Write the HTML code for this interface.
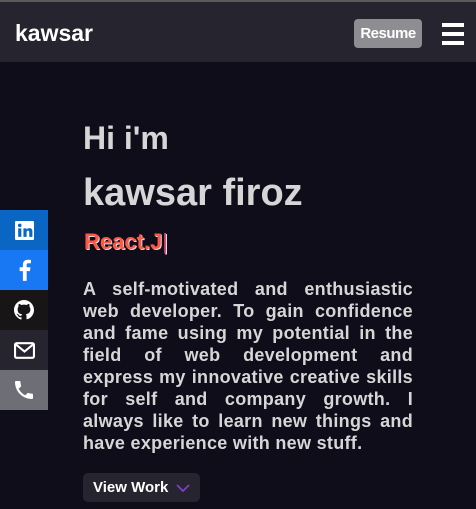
<!DOCTYPE html>
<html><head><style>
*{margin:0;padding:0;box-sizing:border-box}
body{width:476px;height:509px;overflow:hidden;background:#0f0d1a;font-family:"Liberation Sans",sans-serif;position:relative}
.top{height:2px;background:#5a5a5a}
.nav{height:60px;background:#25242f;position:relative}
.logo{position:absolute;left:15px;top:18px;color:#fff;font-weight:bold;font-size:23px}
.res{position:absolute;left:354px;top:17px;width:68px;height:29px;background:#8e8d92;border-radius:4px;color:#fff;font-weight:bold;font-size:15px;text-align:center;line-height:29px;letter-spacing:-0.5px}
.ham{position:absolute;left:442px;top:21px;width:22px}
.ham div{height:3.5px;background:#fff;margin-bottom:5.5px}
.soc{position:absolute;left:0;top:210px;width:48px}
.soc div{height:40px;display:flex;align-items:center;justify-content:center}
.main{position:absolute;left:83px;width:330px;color:#d6d6d6}
h1{position:absolute;left:83px;top:120px;font-size:32px;color:#d6d6d6}
h2{position:absolute;left:83px;top:172px;font-size:38px;color:#d6d6d6}
.rj{position:absolute;left:84px;top:229px;font-size:22px;font-weight:bold;color:#ff5745;text-shadow:1px 1px 0 #ddd}
.rj span{color:#e0457b;font-weight:normal}
.p{top:278px;font-size:18px;line-height:22px;font-weight:bold;letter-spacing:0.3px;white-space:nowrap}
.p span{display:block;text-align:justify;text-align-last:justify}
.p span.l{text-align-last:left}
.btn{position:absolute;left:83px;top:473px;width:117px;height:29px;background:#25242f;border-radius:5px;color:#fff;font-weight:bold;font-size:15px;line-height:29px;padding-left:10px}
</style></head><body>
<div class="top"></div>
<div class="nav"><div class="logo">kawsar</div><div class="res">Resume</div><div class="ham"><div></div><div></div><div></div></div></div>
<div class="soc">
<div style="background:#0a66c2"><svg width="19" height="19" viewBox="0 0 18 18"><rect width="18" height="18" fill="#fff" rx="1"/><rect x="3" y="7" width="3" height="8" fill="#0a66c2"/><circle cx="4.5" cy="4.2" r="1.7" fill="#0a66c2"/><path d="M8 7h3v1.3c.6-1 1.6-1.5 2.7-1.5 2 0 2.8 1.3 2.8 3.4V15h-3v-4.3c0-1-.3-1.6-1.2-1.6S11 9.8 11 10.7V15H8z" fill="#0a66c2"/></svg></div>
<div style="background:#1877f2"><svg width="13" height="22" viewBox="0 0 12 20"><path d="M8 20V11h3l.5-3.5H8V5.5C8 4.5 8.3 3.8 9.8 3.8H12V.7C11.6.6 10.4.5 9 .5 6.2.5 4.5 2.2 4.5 5.2v2.3H1.5V11h3v9z" fill="#fff"/></svg></div>
<div style="background:#171515"><svg width="20" height="20" viewBox="0 0 16 16"><path fill="#fff" d="M8 0C3.6 0 0 3.6 0 8c0 3.5 2.3 6.5 5.5 7.6.4.1.5-.2.5-.4v-1.5c-2.2.5-2.7-1-2.7-1-.4-.9-.9-1.2-.9-1.2-.7-.5.1-.5.1-.5.8.1 1.2.8 1.2.8.7 1.3 1.9.9 2.300.7.1-.5.3-.9.5-1.1-1.8-.2-3.6-.9-3.6-4 0-.9.3-1.6.8-2.1-.1-.2-.4-1 .1-2.1 0 0 .7-.2 2.2.8.6-.2 1.3-.3 2-.3s1.4.1 2 .3c1.5-1 2.2-.8 2.2-.8.4 1.1.2 1.9.1 2.1.5.6.8 1.3.8 2.1 0 3.1-1.9 3.7-3.6 3.9.3.3.5.8.5 1.5v2.2c0 .2.1.5.6.4C13.7 14.5 16 11.5 16 8c0-4.4-3.6-8-8-8z"/></svg></div>
<div style="background:#25242f"><svg width="21" height="17" viewBox="0 0 20 16"><rect x="1" y="1" width="18" height="14" rx="1.5" fill="none" stroke="#fff" stroke-width="2"/><path d="M1.5 2l8.5 7 8.5-7" fill="none" stroke="#fff" stroke-width="2"/></svg></div>
<div style="background:#6e6e76"><svg width="24" height="24" viewBox="0 0 24 24"><path fill="#fff" d="M6.6 10.8c1.4 2.8 3.8 5.1 6.6 6.6l2.2-2.2c.3-.3.7-.4 1-.2 1.1.4 2.3.6 3.6.6.6 0 1 .4 1 1V20c0 .6-.4 1-1 1C10.6 21 3 13.4 3 4c0-.6.4-1 1-1h3.5c.6 0 1 .4 1 1 0 1.3.2 2.5.6 3.6.1.3 0 .7-.2 1z"/></svg></div>
</div>
<h1>Hi i'm</h1>
<h2>kawsar firoz</h2>
<div class="rj">React.J<span>|</span></div>
<div class="main p"><span>A self-motivated and enthusiastic</span><span>web developer. To gain confidence</span><span>and fame using my potential in the</span><span>field of web development and</span><span>express my innovative creative skills</span><span>for self and company growth. I</span><span>always like to learn new things and</span><span class="l">have experience with new stuff.</span></div>
<div class="btn">View Work <svg width="14" height="8" viewBox="0 0 14 8" style="margin-left:4px"><path d="M1 1l6 6 6-6" fill="none" stroke="#7b3fc4" stroke-width="1.8"/></svg></div>
</body></html>
